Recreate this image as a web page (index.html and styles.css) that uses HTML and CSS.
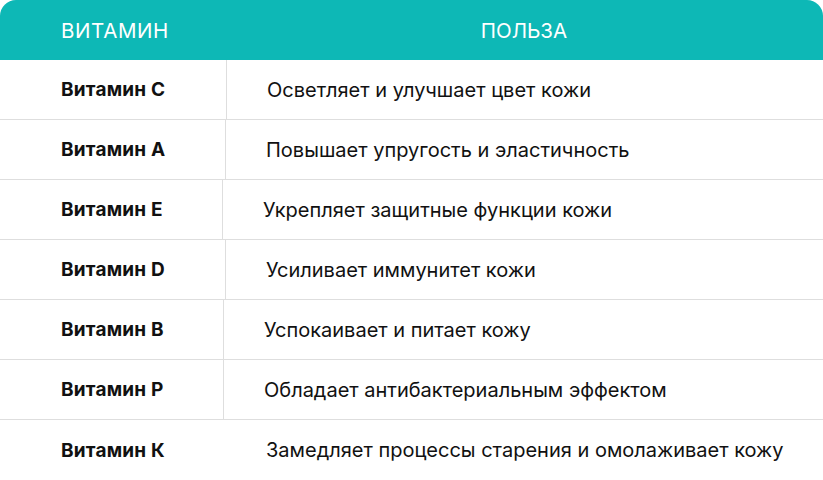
FILE: index.html
```html
<!DOCTYPE html>
<html lang="ru">
<head>
<meta charset="utf-8">
<link rel="stylesheet" href="styles.css">
</head>
<body>
<div class="table">
  <div class="head">
    <div class="head-name">ВИТАМИН</div>
    <div class="head-benefit">ПОЛЬЗА</div>
  </div>
  <div class="row r1"><div class="name">Витамин С</div><div class="benefit">Осветляет и улучшает цвет кожи</div></div>
  <div class="row r2"><div class="name">Витамин А</div><div class="benefit">Повышает упругость и эластичность</div></div>
  <div class="row r3"><div class="name">Витамин Е</div><div class="benefit">Укрепляет защитные функции кожи</div></div>
  <div class="row r4"><div class="name">Витамин D</div><div class="benefit">Усиливает иммунитет кожи</div></div>
  <div class="row r5"><div class="name">Витамин В</div><div class="benefit">Успокаивает и питает кожу</div></div>
  <div class="row r6"><div class="name">Витамин Р</div><div class="benefit">Обладает антибактериальным эффектом</div></div>
  <div class="row r7 last"><div class="name">Витамин К</div><div class="benefit">Замедляет процессы старения и омолаживает кожу</div></div>
</div>
</body>
</html>
```
FILE: styles.css
```css
html, body {
  margin: 0;
  padding: 0;
  background: #fff;
}
body {
  font-family: Inter, "Noto Sans", sans-serif;
  color: #111;
}
.table {
  width: 823px;
  display: flex;
  flex-direction: column;
}
.head {
  height: 60px;
  background: #0db8b6;
  border-radius: 16px 16px 0 0;
  display: flex;
  align-items: center;
  color: #fff;
  font-size: 20.5px;
  font-weight: 400;
}
.head-name {
  width: 227px;
  padding-left: 61px;
  box-sizing: border-box;
  letter-spacing: 0.6px;
}
.head-benefit {
  flex: 1;
  text-align: center;
  padding-right: 2px;
}
.row {
  height: 60px;
  display: flex;
  border-bottom: 1px solid #dedede;
  box-sizing: border-box;
}
.row.last {
  border-bottom: none;
}
.name {
  box-sizing: border-box;
  padding-left: 61px;
  border-right: 1px solid #dedede;
  display: flex;
  align-items: center;
  font-weight: 700;
  font-size: 19px;
  letter-spacing: 0.2px;
}
.benefit {
  display: flex;
  align-items: center;
  font-size: 20px;
  padding-left: 40px;
}
.r1 .name { width: 227px; }
.r2 .name { width: 226px; }
.r3 .name { width: 223px; }
.r4 .name { width: 226px; }
.r5 .name { width: 224px; }
.r6 .name { width: 224px; }
.r7 .name { width: 226px; border-right: none; }
```
